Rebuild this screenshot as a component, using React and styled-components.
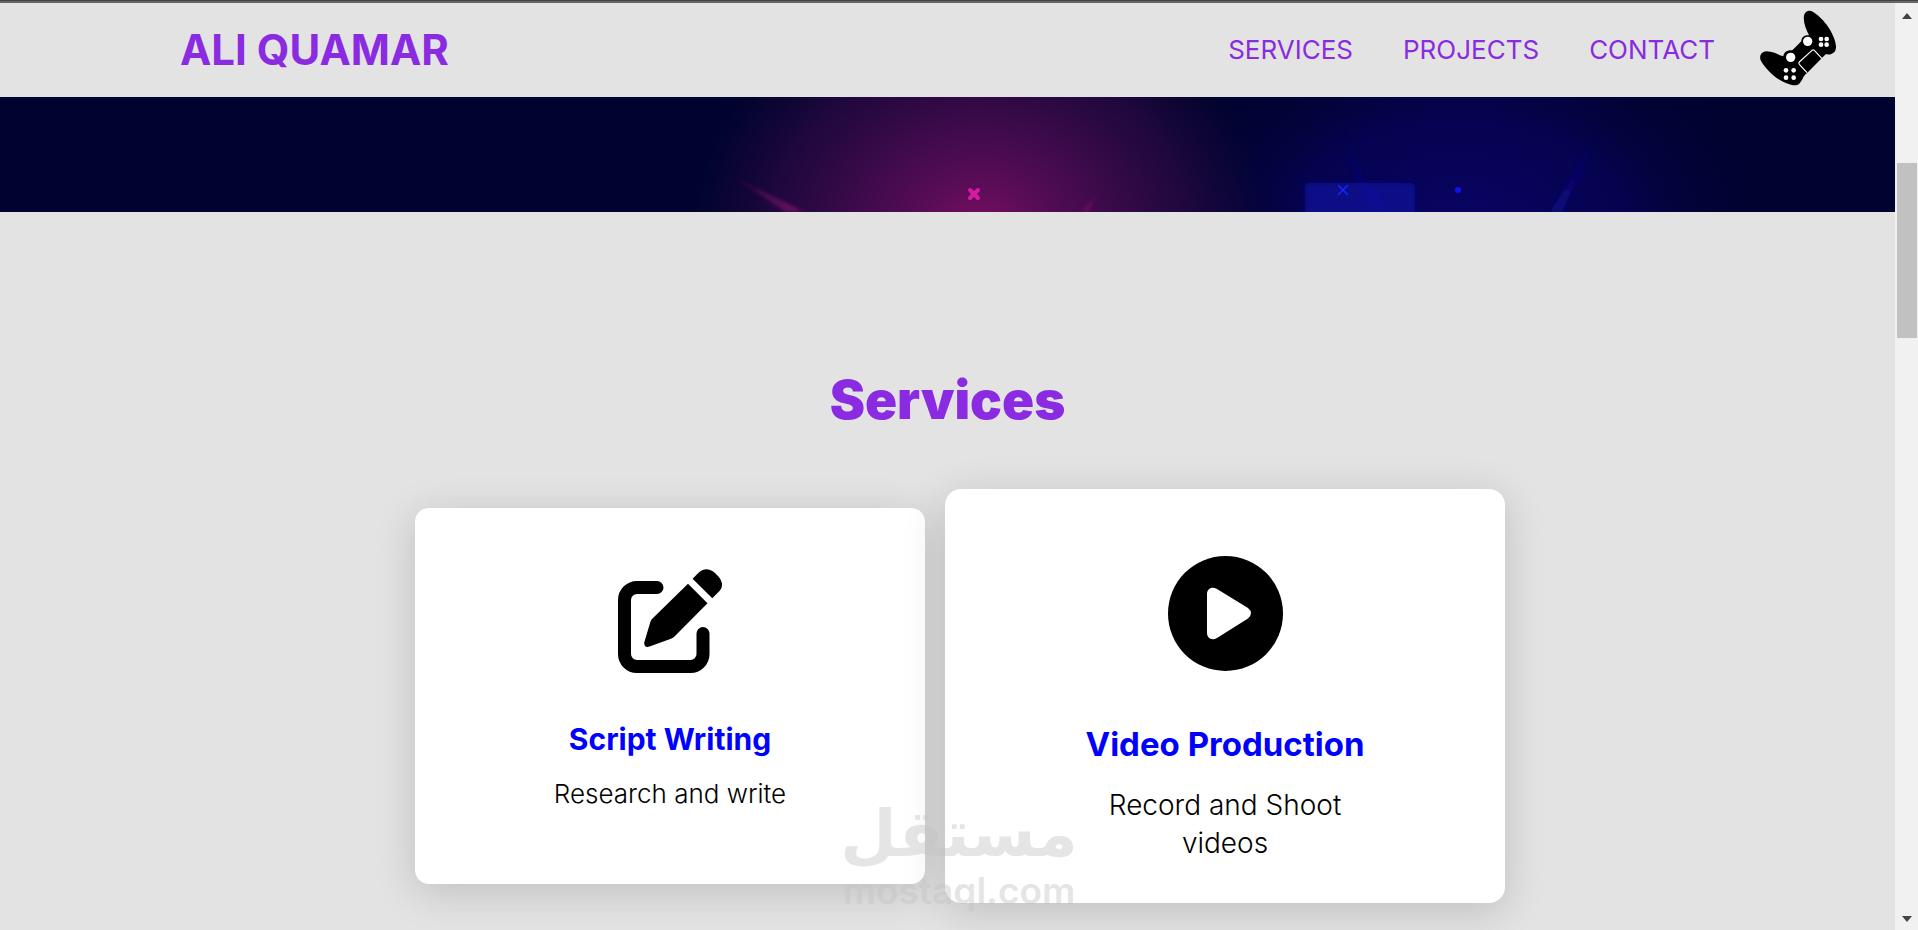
import React from "react";
import styled, { createGlobalStyle } from "styled-components";

const GlobalStyle = createGlobalStyle`
  *, *::before, *::after { box-sizing: border-box; }
  body {
    margin: 0;
    background: #e3e3e3;
    color: #000;
    font-family: "Inter", "Liberation Sans", sans-serif;
  }
  h1, h2, h3, p { margin: 0; }
`;

const Frame = styled.div`
  position: relative;
  display: flex;
  flex-direction: column;
  height: 100vh;
  overflow: hidden;
  border-top: 1px solid #444147;
`;

const FrameEdge = styled.div`
  flex: none;
  height: 2px;
  background: #68666b;
`;

const Viewport = styled.div`
  display: flex;
  flex: 1;
  min-height: 0;
`;

const Page = styled.div`
  flex: 1;
  min-width: 0;
  overflow: hidden;
`;

const Header = styled.header`
  display: flex;
  align-items: center;
  height: 94px;
  padding: 0 58px 2px 180px;
  background: #e3e3e3;
`;

const Brand = styled.a`
  margin-right: auto;
  color: #8a2be2;
  font-size: 42px;
  font-weight: 700;
  text-decoration: none;
  white-space: nowrap;
`;

const Nav = styled.nav`
  display: flex;
  gap: 50px;
  margin: 2px 44px 0 0;
`;

const NavLink = styled.a`
  color: #8a2be2;
  font-size: 26px;
  line-height: 32px;
  text-decoration: none;
`;

const PadIcon = styled.svg`
  display: block;
  flex: none;
  width: 78px;
  height: 78px;
`;

const Hero = styled.div`
  height: 115px;
  background: #00032f;
`;

const HeroArt = styled.svg`
  display: block;
  width: 100%;
  height: 100%;
`;

const Section = styled.section`
  display: flex;
  flex-direction: column;
  align-items: center;
  gap: 68px;
  padding: 148px 24px 80px;
`;

const Heading = styled.h2`
  color: #8a2be2;
  font-size: 53px;
  font-weight: 900;
  line-height: 80px;
`;

const CardRow = styled.div`
  display: grid;
  grid-template-columns: repeat(2, minmax(0, 510px));
  justify-content: center;
  gap: 45px;
  width: 100%;
`;

const Card = styled.article`
  display: flex;
  flex-direction: column;
  align-items: center;
  min-height: ${(p) => (p.$featured ? 414 : 376)}px;
  margin: ${(p) => (p.$featured ? "-19px -25px" : "0")};
  padding: ${(p) => (p.$featured ? "67px 32px 0" : "61px 32px 0")};
  border-radius: ${(p) => (p.$featured ? 16 : 14)}px;
  background: #fff;
  box-shadow: 0 8px 42px rgba(0, 0, 0, 0.16);
  text-align: center;
`;

const CardIcon = styled.svg`
  display: block;
  width: ${(p) => (p.$featured ? 115 : 104)}px;
  height: ${(p) => (p.$featured ? 115 : 104)}px;
  margin-bottom: ${(p) => (p.$featured ? 51 : 46)}px;
`;

const CardTitle = styled.h3`
  margin-bottom: ${(p) => (p.$featured ? 20 : 17)}px;
  color: #00f;
  font-size: ${(p) => (p.$featured ? 33 : 30)}px;
  font-weight: 700;
  line-height: ${(p) => (p.$featured ? 44 : 40)}px;
`;

const CardText = styled.p`
  max-width: 300px;
  font-size: ${(p) => (p.$featured ? 28 : 26)}px;
  font-weight: 300;
  line-height: ${(p) => (p.$featured ? 38 : 36)}px;
`;

const Scrollbar = styled.div`
  display: flex;
  flex: none;
  flex-direction: column;
  align-items: center;
  justify-content: space-between;
  width: 23px;
  padding: 10px 0 8px;
  background: #f1f1f1;
`;

const Arrow = styled.svg`
  display: block;
  width: 10px;
  height: 6px;
  fill: #444;
`;

const Track = styled.div`
  flex: 1;
  width: 20px;
  padding-top: 144px;
`;

const Thumb = styled.div`
  height: 175px;
  background: #c1c1c1;
`;

const Watermark = styled.div`
  position: absolute;
  bottom: 17px;
  left: 50%;
  display: flex;
  flex-direction: column;
  align-items: center;
  transform: translateX(-50%);
  color: #c4c4c4;
  opacity: 0.43;
  pointer-events: none;
`;

const WatermarkArabic = styled.span`
  font-family: "DejaVu Sans", sans-serif;
  font-size: 65px;
  font-weight: 700;
  line-height: 68px;
`;

const WatermarkLatin = styled.span`
  font-size: 37px;
  font-weight: 600;
  line-height: 45px;
`;

function Gamepad() {
  return (
    <PadIcon viewBox="57 29 234 234" role="img" aria-label="Game controller">
      <path d="M192 46C194 35 202 31 210 31C217 32 223 37 228 41C247 55 264 76 274 96C282 111 289 130 288 142C287 153 281 158 275 160C269 164 263 162 257 162L202 217C192 224 190 231 187 237C181 247 177 254 168 255C147 256 121 241 105 229C87 215 68 193 62 180C57 165 65 154 80 153C100 153 114 164 130 168C131 155 143 148 157 150L184 123C184 111 193 103 207 105C198 87 189 66 192 46Z" />
      <g fill="#fff">
        <circle cx="203" cy="123" r="14" />
        <circle cx="152" cy="171" r="14" />
        <circle cx="243" cy="116" r="7" />
        <circle cx="260" cy="116" r="7" />
        <circle cx="243" cy="133" r="7" />
        <circle cx="260" cy="133" r="7" />
        <circle cx="138" cy="210" r="7" />
        <circle cx="161" cy="210" r="7" />
        <circle cx="138" cy="232" r="7" />
        <circle cx="161" cy="232" r="7" />
      </g>
      <path
        d="M201 217L178 192Q175 188 178 185L216 150Q220 147 223 150L246 175"
        fill="none"
        stroke="#fff"
        strokeWidth="3.5"
      />
    </PadIcon>
  );
}

function HeroGlow() {
  return (
    <HeroArt viewBox="0 0 1895 115" preserveAspectRatio="xMidYMax slice" aria-hidden="true">
      <defs>
        <radialGradient id="pink">
          <stop offset="0" stopColor="#7c0e62" />
          <stop offset="0.2" stopColor="#5e0d58" stopOpacity="0.95" />
          <stop offset="0.45" stopColor="#440b4d" stopOpacity="0.85" />
          <stop offset="0.7" stopColor="#2e0a44" stopOpacity="0.65" />
          <stop offset="0.87" stopColor="#1c0838" stopOpacity="0.35" />
          <stop offset="1" stopColor="#00032f" stopOpacity="0" />
        </radialGradient>
        <radialGradient id="blue">
          <stop offset="0" stopColor="#090464" />
          <stop offset="0.5" stopColor="#060354" stopOpacity="0.9" />
          <stop offset="1" stopColor="#00032f" stopOpacity="0" />
        </radialGradient>
        <linearGradient id="pinkRay" x1="0" y1="0" x2="1" y2="1">
          <stop offset="0" stopColor="#7a1268" stopOpacity="0" />
          <stop offset="1" stopColor="#841468" stopOpacity="0.8" />
        </linearGradient>
        <linearGradient id="blueRay" x1="0" y1="0" x2="0" y2="1">
          <stop offset="0" stopColor="#0c0a80" stopOpacity="0" />
          <stop offset="1" stopColor="#0c0a80" />
        </linearGradient>
        <filter id="soft" x="-20%" y="-20%" width="140%" height="140%">
          <feGaussianBlur stdDeviation="2" />
        </filter>
      </defs>
      <ellipse cx="1460" cy="130" rx="320" ry="220" fill="url(#blue)" />
      <ellipse cx="980" cy="135" rx="300" ry="255" fill="url(#pink)" />
      <g filter="url(#soft)">
        <path d="M725 75L805 115H786Z" fill="url(#pinkRay)" />
        <path d="M1098 98L1088 115H1080Z" fill="#7a1268" opacity="0.6" />
        <path d="M1343 30L1366 90H1358Z" fill="url(#blueRay)" opacity="0.6" />
        <path d="M1602 30L1562 115H1550Z" fill="url(#blueRay)" opacity="0.9" />
        <rect x="1305" y="86" width="110" height="40" rx="3" fill="#090a88" />
        <path d="M1362 86H1372L1388 115H1374Z" fill="#0b0c94" />
      </g>
      <path d="M970 93L978 101M978 93L970 101" stroke="#d51ca0" strokeWidth="4" strokeLinecap="round" />
      <path d="M1338 88L1348 98M1348 88L1338 98" stroke="#1028ff" strokeWidth="1.5" />
      <circle cx="1458" cy="93" r="3" fill="#1010f0" />
    </HeroArt>
  );
}

function PenSquare() {
  return (
    <CardIcon viewBox="0 0 104 104" aria-hidden="true">
      <path
        d="M39 18.5H19A12.5 12.5 0 0 0 6.5 31V85A12.5 12.5 0 0 0 19 97.5H72.5A12.5 12.5 0 0 0 85 85V64.5"
        fill="none"
        stroke="#000"
        strokeWidth="13"
        strokeLinecap="round"
      />
      <path d="M74.6 9.7L80 4.3Q88 -3.5 97 4L100 7Q108 16 100 23.5L94.3 29.3Z" />
      <path d="M70 14.7L89.5 34.3L56.5 67.5Q55 69 53 69.8L31.5 77.6C28 79 25.5 76.5 26.4 73L32.5 52.5Q33 50.5 35 49Z" />
    </CardIcon>
  );
}

function PlayCircle() {
  return (
    <CardIcon $featured viewBox="0 0 115 115" aria-hidden="true">
      <circle cx="57.5" cy="57.5" r="57.5" />
      <path
        d="M39 38C39 32.5 44 29.8 49 33L80 52Q86 57 80 62.5L49 82C44 85 39 82 39 77Z"
        fill="#fff"
      />
    </CardIcon>
  );
}

export default function App() {
  return (
    <>
      <GlobalStyle />
      <Frame>
        <FrameEdge />
        <Viewport>
          <Page>
            <Header>
              <Brand href="#home">ALI QUAMAR</Brand>
              <Nav aria-label="Main">
                <NavLink href="#services">SERVICES</NavLink>
                <NavLink href="#projects">PROJECTS</NavLink>
                <NavLink href="#contact">CONTACT</NavLink>
              </Nav>
              <Gamepad />
            </Header>
            <main>
              <Hero>
                <HeroGlow />
              </Hero>
              <Section id="services">
                <Heading>Services</Heading>
                <CardRow>
                  <Card>
                    <PenSquare />
                    <CardTitle>Script Writing</CardTitle>
                    <CardText>Research and write</CardText>
                  </Card>
                  <Card $featured>
                    <PlayCircle />
                    <CardTitle $featured>Video Production</CardTitle>
                    <CardText $featured>Record and Shoot videos</CardText>
                  </Card>
                </CardRow>
              </Section>
            </main>
          </Page>
          <Scrollbar aria-hidden="true">
            <Arrow viewBox="0 0 10 6">
              <path d="M5 0L10 6H0Z" />
            </Arrow>
            <Track>
              <Thumb />
            </Track>
            <Arrow viewBox="0 0 10 6">
              <path d="M0 0H10L5 6Z" />
            </Arrow>
          </Scrollbar>
        </Viewport>
        <Watermark>
          <WatermarkArabic lang="ar" dir="rtl">مستقل</WatermarkArabic>
          <WatermarkLatin>mostaql.com</WatermarkLatin>
        </Watermark>
      </Frame>
    </>
  );
}
